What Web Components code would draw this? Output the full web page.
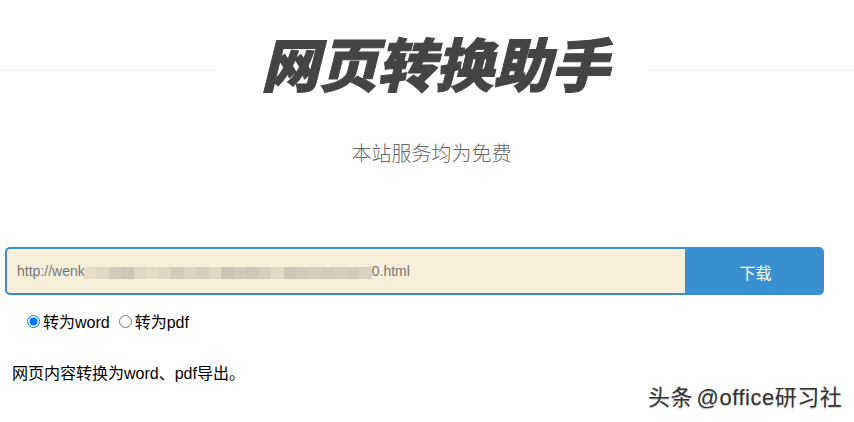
<!DOCTYPE html>
<html lang="zh">
<head>
<meta charset="utf-8">
<title>网页转换助手</title>
<style>
  html, body { margin: 0; padding: 0; background: #fff; }
  body { width: 854px; height: 422px; overflow: hidden; position: relative;
    font-family: "Liberation Sans", "Noto Sans CJK SC", sans-serif; }
</style>
</head>
<body>
<page-header heading="网页转换助手" sub="本站服务均为免费"></page-header>
<url-form></url-form>
<format-options></format-options>
<page-note>网页内容转换为word、pdf导出。</page-note>
<water-mark>头条 @office研习社</water-mark>

<script>
class PageHeader extends HTMLElement {
  constructor() {
    super();
    this.attachShadow({ mode: "open" });
    this.shadowRoot.innerHTML = `
      <style>
        :host { display: block; height: 247px; }
        .top { display: flex; align-items: center; height: 141px; }
        .line { height: 1px; background: #eee; }
        .line.left { width: 216px; }
        .line.right { flex: 1; }
        h1 {
          width: 432px; margin: 0; padding-left: 6px; box-sizing: border-box; text-align: center;
          font: italic 900 58px/125px "Noto Sans CJK SC", sans-serif;
          height: 141px; color: #444;
          -webkit-text-stroke: 1px #444; white-space: nowrap;
        }
        p {
          margin: 0; padding: 1px 0 0 9px; text-align: center; font-size: 20px; line-height: 24px;
          font-weight: 300; color: #666;
        }
      </style>
      <div class="top"><div class="line left"></div><h1></h1><div class="line right"></div></div>
      <p></p>
    `;
  }
  connectedCallback() {
    this.shadowRoot.querySelector("h1").textContent = this.getAttribute("heading");
    this.shadowRoot.querySelector("p").textContent = this.getAttribute("sub");
  }
}
customElements.define("page-header", PageHeader);

class UrlForm extends HTMLElement {
  constructor() {
    super();
    this.attachShadow({ mode: "open" });
    // pixelated patch that hides the middle of the address
    const tones = ["#e6dcc8","#e0d7c4","#d2cabb","#cdc5b6","#e0d7c4","#e6dcc8","#ded5c2","#d2cabb","#ddd4c1","#d6cebd",
      "#e0d7c4","#ccc4b5","#d2cabb","#cfc7b7","#d6cebd","#e2d9c6","#cdc5b6","#d2cabb","#d6cebd","#d2cabb","#d6cebd","#d2cabb","#dad2c0"];
    const blocks = tones.map(c => `<i style="background:${c}"></i>`).join("");
    this.shadowRoot.innerHTML = `
      <style>
        :host { display: block; margin: 0 30px 0 5px; }
        .box {
          display: flex; height: 48px; box-sizing: border-box;
          border: 2px solid #3a8fd0; border-radius: 5px; overflow: hidden; background: #3a8fd0;
        }
        .url {
          flex: 1; display: flex; align-items: center; padding-left: 10px;
          background: #f7efd9; color: #757575; font-size: 14px;
        }
        .blur { display: flex; width: 288px; height: 12px; margin: 3px 0 0 -1px; }
        .blur i { flex: 1; }
        .btn {
          width: 137px; display: flex; align-items: center; justify-content: center;
          color: #fff; font-size: 16px; padding: 2px 0 0 4px; box-sizing: border-box;
        }
      </style>
      <div class="box">
        <div class="url"><span>http://wenk</span><div class="blur">${blocks}</div><span>0.html</span></div>
        <div class="btn">下载</div>
      </div>
    `;
  }
}
customElements.define("url-form", UrlForm);

class FormatOptions extends HTMLElement {
  constructor() {
    super();
    this.attachShadow({ mode: "open" });
    this.shadowRoot.innerHTML = `
      <style>
        :host { display: flex; align-items: center; gap: 9px; height: 24px; margin: 14px 0 0 27px; font-size: 16px; color: #000; }
        label { display: flex; align-items: center; gap: 3px; }
        input { width: 13px; height: 13px; margin: 0; }
      </style>
      <label><input type="radio" name="fmt" checked>转为word</label>
      <label><input type="radio" name="fmt">转为pdf</label>
    `;
  }
}
customElements.define("format-options", FormatOptions);

class PageNote extends HTMLElement {
  constructor() {
    super();
    this.attachShadow({ mode: "open" });
    this.shadowRoot.innerHTML = `
      <style>
        :host { display: block; margin: 29px 0 0 12px; font-size: 16px; line-height: 24px; color: #000; }
      </style>
      <slot></slot>
    `;
  }
}
customElements.define("page-note", PageNote);

class WaterMark extends HTMLElement {
  constructor() {
    super();
    this.attachShadow({ mode: "open" });
    this.shadowRoot.innerHTML = `
      <style>
        :host {
          position: absolute; left: 648px; top: 385px; font-size: 22px; line-height: 26px; white-space: nowrap;
          letter-spacing: .5px; word-spacing: -3px;
          color: #333; text-shadow: 0 1px 1px rgba(0,0,0,.25);
        }
      </style>
      <slot></slot>
    `;
  }
}
customElements.define("water-mark", WaterMark);
</script>
</body>
</html>
